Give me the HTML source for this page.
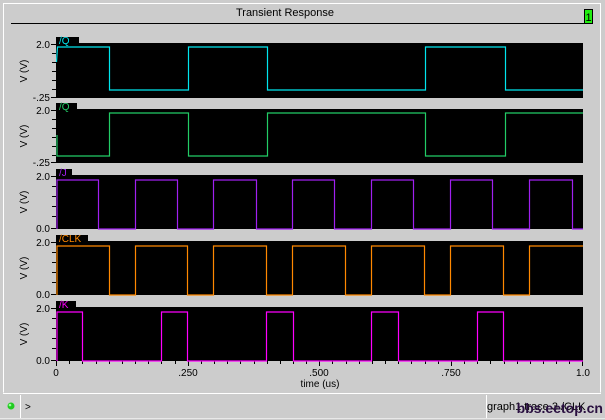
<!DOCTYPE html>
<html><head><meta charset="utf-8"><style>
html,body{margin:0;padding:0;background:#cccccc;}
body{width:605px;height:420px;overflow:hidden;position:relative;font-family:"Liberation Sans",sans-serif;}
svg{position:absolute;left:0;top:0}
</style></head><body>
<svg width="605" height="420" viewBox="0 0 605 420" font-family="Liberation Sans, sans-serif">
<rect x="0" y="0" width="605" height="420" fill="#cccccc"/>
<!-- frame -->
<path d="M3.5 392.5 V3.5 H600.5 V392.5" fill="none" stroke="#ffffff" stroke-width="1"/>
<line x1="3" y1="393.5" x2="601" y2="393.5" stroke="#ffffff"/>
<text x="285" y="16" font-size="11" text-anchor="middle" fill="#000">Transient Response</text>
<line x1="11" y1="23.5" x2="586" y2="23.5" stroke="#000" stroke-width="1"/>
<rect x="584.5" y="9.5" width="8" height="14" fill="#22ee11" stroke="#000"/>
<text x="588.5" y="21" font-size="11" text-anchor="middle" fill="#000">1</text>

<!-- panels -->
<g fill="#000">
<rect x="56" y="43" width="527" height="55"/>
<rect x="56" y="109" width="527" height="54"/>
<rect x="56" y="175" width="527" height="54"/>
<rect x="56" y="241" width="527" height="54"/>
<rect x="56" y="307" width="527" height="54"/>
<rect x="56" y="37" width="23" height="7"/>
<rect x="56" y="103" width="21" height="7"/>
<rect x="56" y="169" width="16" height="7"/>
<rect x="56" y="235" width="32" height="7"/>
<rect x="56" y="301" width="20" height="7"/>
</g>
<g font-size="10">
<text x="59" y="44" fill="#00e5ee">/Q</text>
<text x="59" y="110" fill="#22cc66">/Q</text>
<text x="59" y="176" fill="#a020f0">/J</text>
<text x="59" y="242" fill="#ff8800">/CLK</text>
<text x="59" y="308" fill="#ff00ff">/K</text>
</g>

<!-- y ticks -->
<g stroke="#000" stroke-width="1">
<path d="M51 44.5H56M52 53.5H56M52 62.5H56M52 71.5H56M52 80.5H56M52 89.5H56M51 97.5H56"/>
<path d="M51 110.5H56M52 119.5H56M52 128.5H56M52 137.5H56M52 146.5H56M52 155.5H56M51 162.5H56"/>
<path d="M51 176.5H56M52 186.5H56M52 196.5H56M52 206.5H56M52 216.5H56M51 228.5H56"/>
<path d="M51 242.5H56M52 252.5H56M52 262.5H56M52 272.5H56M52 282.5H56M51 294.5H56"/>
<path d="M51 308.5H56M52 318.5H56M52 328.5H56M52 338.5H56M52 348.5H56M51 360.5H56"/>
</g>
<g font-size="10" text-anchor="end" fill="#000">
<text x="50" y="48">2.0</text><text x="50" y="101">-.25</text>
<text x="50" y="114">2.0</text><text x="50" y="166">-.25</text>
<text x="50" y="180">2.0</text><text x="50" y="232">0.0</text>
<text x="50" y="246">2.0</text><text x="50" y="298">0.0</text>
<text x="50" y="312">2.0</text><text x="50" y="364">0.0</text>
</g>
<g font-size="10" fill="#000" text-anchor="middle">
<text transform="translate(27,71) rotate(-90)">V (V)</text>
<text transform="translate(27,136) rotate(-90)">V (V)</text>
<text transform="translate(27,202) rotate(-90)">V (V)</text>
<text transform="translate(27,268) rotate(-90)">V (V)</text>
<text transform="translate(27,334) rotate(-90)">V (V)</text>
</g>

<!-- x axis -->
<g stroke="#000">
<path d="M56.5 361V366M188.5 361V366M319.5 361V366M451.5 361V366M582.5 361V366"/>
<path d="M69.5 361V364M82.5 361V364M96.5 361V364M109.5 361V364M122.5 361V364M135.5 361V364M148.5 361V364M161.5 361V364M175.5 361V364M201.5 361V364M214.5 361V364M227.5 361V364M240.5 361V364M254.5 361V364M267.5 361V364M280.5 361V364M293.5 361V364M306.5 361V364M332.5 361V364M346.5 361V364M359.5 361V364M372.5 361V364M385.5 361V364M398.5 361V364M411.5 361V364M425.5 361V364M438.5 361V364M464.5 361V364M477.5 361V364M490.5 361V364M504.5 361V364M517.5 361V364M530.5 361V364M543.5 361V364M556.5 361V364M569.5 361V364"/>
</g>
<g font-size="10" fill="#000" text-anchor="middle">
<text x="56" y="376">0</text>
<text x="188" y="376">.250</text>
<text x="319" y="376">.500</text>
<text x="451" y="376">.750</text>
<text x="583" y="376">1.0</text>
<text x="320" y="387">time (us)</text>
</g>

<!-- waveforms -->
<g fill="none" stroke-width="1.2">
<polyline stroke="#00e5ee" points="56.5,62 57.5,47 109.5,47 109.5,90 188.5,90 188.5,47 267.5,47 267.5,90 425.5,90 425.5,47 505.5,47 505.5,90 583,90"/>
<polyline stroke="#22cc66" points="57,135 57,156 109.5,156 109.5,113 188.5,113 188.5,156 267.5,156 267.5,113 425.5,113 425.5,156 505.5,156 505.5,113 583,113"/>
<polyline stroke="#a020f0" points="57,229 57,180 98.5,180 98.5,229 135.5,229 135.5,180 177.5,180 177.5,229 213.5,229 213.5,180 256.5,180 256.5,229 292.5,229 292.5,180 334.5,180 334.5,229 371.5,229 371.5,180 413.5,180 413.5,229 450.5,229 450.5,180 492.5,180 492.5,229 529.5,229 529.5,180 572.5,180 572.5,229 583,229"/>
<polyline stroke="#ff8800" points="57,295 57,246 109.5,246 109.5,295 135.5,295 135.5,246 187.5,246 187.5,295 213.5,295 213.5,246 266.5,246 266.5,295 292.5,295 292.5,246 345.5,246 345.5,295 371.5,295 371.5,246 424.5,246 424.5,295 450.5,295 450.5,246 503.5,246 503.5,295 529.5,295 529.5,246 583,246"/>
<polyline stroke="#ff00ff" points="57,361 57,312 82.5,312 82.5,361 161.5,361 161.5,312 187.5,312 187.5,361 266.5,361 266.5,312 293.5,312 293.5,361 371.5,361 371.5,312 398.5,312 398.5,361 477.5,361 477.5,312 503.5,312 503.5,361 583,361"/>
</g>

<!-- status bar -->
<line x1="20.5" y1="395" x2="20.5" y2="418" stroke="#ffffff"/>
<line x1="486.5" y1="395" x2="486.5" y2="418" stroke="#ffffff"/>
<line x1="0" y1="418.5" x2="605" y2="418.5" stroke="#e8e8e8"/>
<circle cx="11" cy="406" r="3.5" fill="#22cc22"/>
<circle cx="10" cy="405" r="1.3" fill="#99ff99"/>
<text x="25" y="410" font-size="10" fill="#000">&gt;</text>
<text x="487" y="410" font-size="11" fill="#000">graph1 trace 3 /CLK</text>
<text x="603" y="413" font-size="14" font-weight="bold" fill="#2a1040" text-anchor="end" font-family="Liberation Sans Narrow, Liberation Sans, sans-serif">bbs.eetop.cn</text>
</svg>
</body></html>
